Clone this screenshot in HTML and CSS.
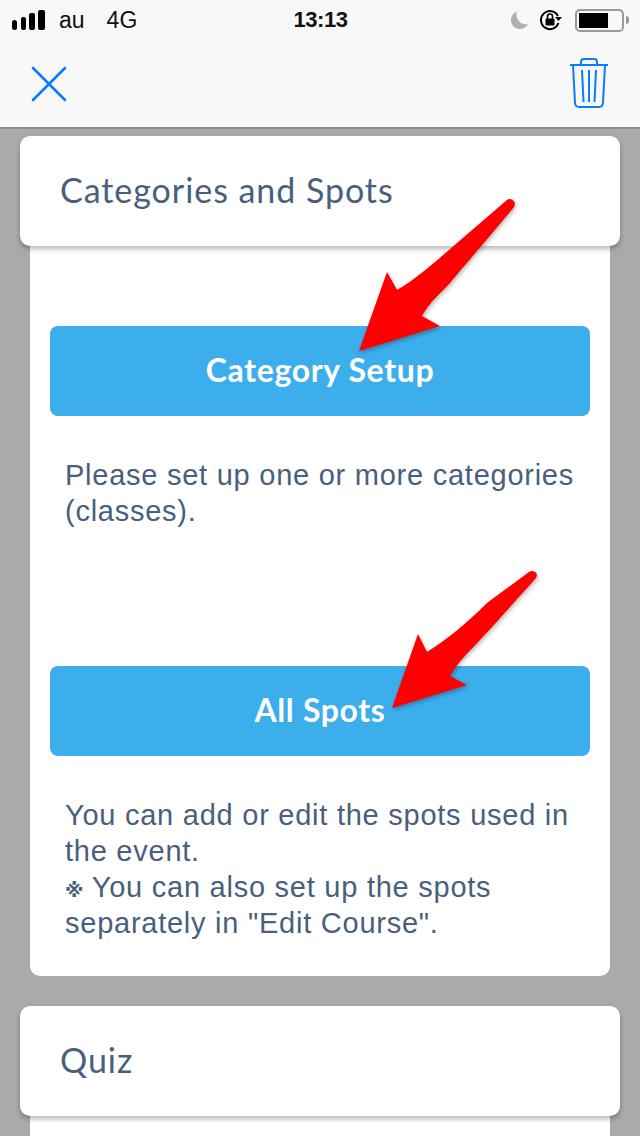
FILE: index.html
```html
<!DOCTYPE html>
<html lang="en">
<head>
  <meta charset="UTF-8" />
  <meta name="viewport" content="width=device-width,initial-scale=1" />
  <title>Categories and Spots</title>
  <link rel="stylesheet" href="styles.css">
</head>
<body>
  <header class="top">
    <div class="status">
      <div class="status-left">
        <svg class="signal" width="34" height="20" viewBox="0 0 34 20">
          <rect x="0" y="10" width="5" height="10" rx="2.5"/>
          <rect x="9" y="7" width="5" height="13" rx="2"/>
          <rect x="17" y="3" width="6" height="17" rx="2"/>
          <rect x="26" y="0" width="7" height="20" rx="2"/>
        </svg>
        <span class="carrier">au</span>
        <span class="carrier net">4G</span>
      </div>
      <div class="clock">13:13</div>
      <div class="status-right">
        <svg class="moon" width="20" height="20" viewBox="0 0 20 20">
          <path d="M8 1.500 A9 9 0 1 0 19 14 A9.500 9.500 0 0 1 8 1.500 Z" fill="#b0b0b0"/>
        </svg>
        <svg class="lock" width="24" height="22" viewBox="0 0 24 22">
          <path d="M19 7 A9 9 0 1 0 19.500 14" fill="none" stroke="#000" stroke-width="2"/>
          <path d="M16 8 L23 8 L19.500 12 Z" fill="#000"/>
          <rect x="6.500" y="9.500" width="9" height="7" rx="1" fill="#000"/>
          <path d="M8.500 10 V7.500 A2.500 2.500 0 0 1 13.500 7.500 V10" fill="none" stroke="#000" stroke-width="1.600"/>
        </svg>
        <div class="battery"><span class="battery-level"></span></div>
        <span class="battery-cap"></span>
      </div>
    </div>
    <nav class="nav">
      <svg class="close" width="36" height="36" viewBox="0 0 36 36">
        <path d="M2 2 L34 34 M34 2 L2 34" stroke="#0a7cff" stroke-width="2.600" stroke-linecap="round"/>
      </svg>
      <svg class="trash" width="38" height="50" viewBox="0 0 38 50" fill="none" stroke="#0a7cff" stroke-width="2">
        <path d="M0 7 H38" stroke-width="2.200"/>
        <path d="M11 7 V4 Q11 1 14 1 H24 Q27 1 27 4 V7"/>
        <path d="M3 7 L5 45 Q5.500 49 9 49 H29 Q32.500 49 33 45 L35 7"/>
        <path d="M12 12 L13.500 44 M19 12 V44 M26 12 L24.500 44"/>
      </svg>
    </nav>
  </header>

  <main class="content">
    <section class="panel">
      <h2 class="panel-head">Categories and Spots</h2>
      <div class="panel-body">
        <div class="item">
          <a class="btn" href="#">Category Setup</a>
          <svg class="arrow arrow-one" width="180" height="160" viewBox="0 0 180 160">
            <path d="M170 3 Q177 5 174 11 C150 40 125 69 110 87 C103 95 90 105 82 120 L100 130 L19 155 L47 76 L57 94 C75 84 95 66 117 47 L167 4 Q168 3 170 3 Z" fill="#ff0000"/>
          </svg>
          <p class="note">Please set up one or more categories (classes).</p>
        </div>
        <div class="item">
          <a class="btn" href="#">All Spots</a>
          <svg class="arrow arrow-two" width="170" height="150" viewBox="0 0 170 150">
            <path d="M155 2 Q162 3 159 9 C140 30 118 55 103 71 C96 79 81 92 73 107 L90 116 L15 139 L41 65 L50 83 C68 72 90 54 110 34 L152 3 Q153 2 155 2 Z" fill="#ff0000"/>
          </svg>
          <p class="note">You can add or edit the spots used in the event.<br><span class="mark">※</span> You can also set up the spots separately in "Edit Course".</p>
        </div>
      </div>
    </section>

    <section class="panel">
      <h2 class="panel-head">Quiz</h2>
      <div class="panel-body"></div>
    </section>
  </main>
</body>
</html>
```

FILE: styles.css
```css
:root{
  --bar:#f8f8f8;
  --page:#aaaaaa;
  --blue:#3daeec;
  --slate:#48607c;
  --radius:10px;
}
*{box-sizing:border-box;}
body{
  margin:0;
  height:1136px;
  overflow:hidden;
  background:var(--page);
  font-family:"Liberation Sans",Arial,sans-serif;
}

/* top bars */
.top{
  height:129px;
  background:var(--bar);
  border-bottom:2px solid #8f8f8f;
}
.status{
  height:40px;
  display:grid;
  grid-template-columns:1fr auto 1fr;
  align-items:center;
  padding:0 11px 0 12px;
  color:#000;
}
.status-left{display:flex;align-items:center;}
.signal{fill:#000;flex:none;}
.carrier{font-size:23px;margin-left:13px;color:#111;}
.net{margin-left:22px;}
.clock{font-size:22px;font-weight:700;letter-spacing:-.5px;color:#111;}
.status-right{display:flex;align-items:center;justify-content:flex-end;}
.moon{margin-right:10px;}
.lock{margin-right:12px;}
.battery{
  width:49px;
  height:23px;
  border:2px solid #9a9a9a;
  border-radius:5px;
  padding:2px;
}
.battery-level{display:block;width:29px;height:15px;background:#000;}
.battery-cap{
  width:3px;
  height:8px;
  margin-left:2px;
  background:#9a9a9a;
  border-radius:0 3px 3px 0;
}
.nav{
  height:87px;
  display:flex;
  align-items:flex-start;
  justify-content:space-between;
  padding:0 32px 0 31px;
}
.close{margin-top:26px;}
.trash{margin-top:18px;}

/* panels */
.content{padding:7px 20px 0;}
.panel + .panel{margin-top:30px;}
.panel-head{
  margin:0;
  height:110px;
  padding:0 0 3px 40px;
  display:flex;
  align-items:center;
  background:#fff;
  border-radius:var(--radius);
  box-shadow:0 3px 5px rgba(0,0,0,.28);
  position:relative;
  font-family:Lato,sans-serif;
  font-size:34px;
  font-weight:400;
  letter-spacing:.95px;
  color:var(--slate);
}
.panel-body{
  margin:0 10px;
  padding:80px 20px 0;
  background:#fff;
  border-radius:0 0 var(--radius) var(--radius);
}
.panel-body:empty{height:40px;padding:0;}
.item{position:relative;padding-bottom:35px;}
.item + .item{padding-top:102px;}
.btn{
  display:block;
  height:90px;
  line-height:87px;
  background:var(--blue);
  border-radius:8px;
  text-align:center;
  text-decoration:none;
  color:#fff;
  font-family:Lato,sans-serif;
  font-size:32px;
  font-weight:700;
  letter-spacing:.65px;
}
.note{
  margin:41px 15px 0;
  font-size:29px;
  line-height:36px;
  letter-spacing:.75px;
  color:var(--slate);
}
.mark{
  font-family:"DejaVu Sans",sans-serif;
  font-size:19px;
  line-height:1;
  font-weight:700;
  letter-spacing:0;
}

/* red arrows over the buttons */
.arrow{position:absolute;overflow:visible;filter:drop-shadow(1px 2px 2px rgba(0,0,0,.3));}
.arrow-one{left:290px;top:-130px;}
.arrow-two{left:327px;top:5px;}
```
